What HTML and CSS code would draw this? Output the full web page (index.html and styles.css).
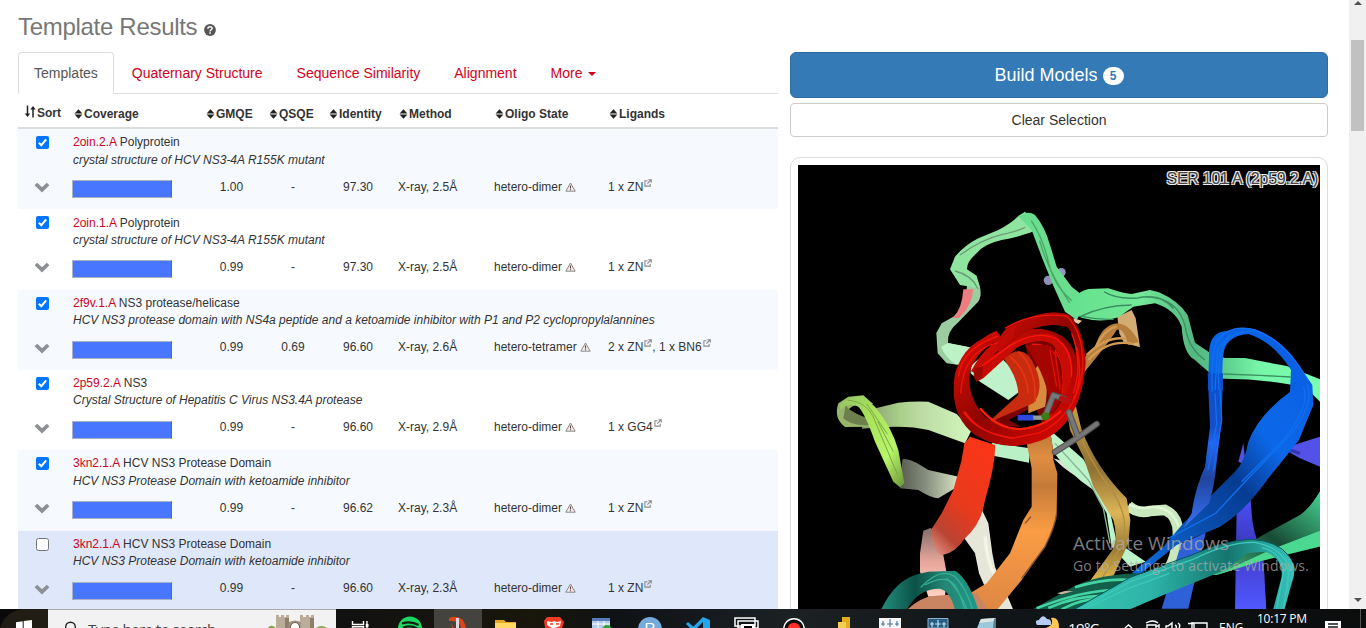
FILE: index.html
```html
<!DOCTYPE html>
<html lang="en">
<head>
<meta charset="utf-8">
<title>Template Results</title>
<link rel="stylesheet" href="styles.css">
</head>
<body>
<svg class="defs" width="0" height="0" aria-hidden="true">
  <symbol id="sort" viewBox="0 0 8 10"><path d="M4 .3 7.900 4.400H.1ZM4 9.700.1 5.600H7.900Z" fill="#222"/></symbol>
  <symbol id="down" viewBox="0 0 16 11"><path d="M.6 3.300 3.200.8 8 5.300 12.800.8 15.400 3.300 8 10.600Z" fill="#8c8f94"/></symbol>
  <symbol id="warn" viewBox="0 0 11 10"><path d="M5.500 1 10.200 9.200H.8Z" fill="#f2eeee" stroke="#888" stroke-linejoin="round"/><path d="M5.500 3.400V6.500M5.500 7.300V8.300" stroke="#784545" stroke-width="1.200"/></symbol>
  <symbol id="ext" viewBox="0 0 8 8"><path d="M3.500 1.700H.9V7.100H6.200V4.800M4.300.7H7.300V3.600M7 1 3.300 4.700" fill="none" stroke="#8b8b8b" stroke-width="1.100"/></symbol>
  <symbol id="check" viewBox="0 0 13 13"><rect width="13" height="13" rx="2" fill="#0075ff"/><path d="M2.800 6.800 5.300 9.200 10.200 3.400" fill="none" stroke="#fff" stroke-width="2"/></symbol>
  <symbol id="uncheck" viewBox="0 0 13 13"><rect x=".5" y=".5" width="12" height="12" rx="2" fill="#fff" stroke="#767676"/></symbol>
</svg>
<div class="page">
  <main class="results">
    <h1 class="title">Template Results <svg class="help" viewBox="0 0 12 12"><circle cx="6" cy="6" r="5.900" fill="#555"/><path d="M3.900 4.700C3.900 2 8.200 2.200 8.100 4.500 8 5.800 6.100 5.800 6.100 7.400M6.100 8.300V9.800" fill="none" stroke="#fff" stroke-width="1.500"/></svg></h1>
    <nav class="tabs">
      <span class="tab tab-on">Templates</span>
      <span class="tab">Quaternary Structure</span>
      <span class="tab">Sequence Similarity</span>
      <span class="tab">Alignment</span>
      <span class="tab">More <i class="caret"></i></span>
    </nav>
    <div class="head">
      <span class="head-sort"><svg width="12" height="13" viewBox="0 0 12 13"><path d="M3.500 .5V10M9 12.500V3" fill="none" stroke="#222" stroke-width="1.500"/><path d="M.8 8.500H6.200L3.500 12ZM6.300 4.500H11.700L9 1Z" fill="#222"/></svg>Sort</span>
      <span><svg class="sort"><use href="#sort"/></svg>Coverage</span>
      <span><svg class="sort"><use href="#sort"/></svg>GMQE</span>
      <span><svg class="sort"><use href="#sort"/></svg>QSQE</span>
      <span><svg class="sort"><use href="#sort"/></svg>Identity</span>
      <span><svg class="sort"><use href="#sort"/></svg>Method</span>
      <span><svg class="sort"><use href="#sort"/></svg>Oligo State</span>
      <span><svg class="sort"><use href="#sort"/></svg>Ligands</span>
    </div>
    <section class="row tint">
      <svg class="check"><use href="#check"/></svg>
      <div class="name"><div><a>2oin.2.A</a> Polyprotein</div><em>crystal structure of HCV NS3-4A R155K mutant</em></div>
      <svg class="down"><use href="#down"/></svg><i class="bar"></i>
      <span class="num">1.00</span><span class="num">-</span><span class="num">97.30</span><span>X-ray, 2.5Å</span>
      <span>hetero-dimer <svg class="warn"><use href="#warn"/></svg></span><span>1 x ZN<svg class="ext"><use href="#ext"/></svg></span>
    </section>
    <section class="row">
      <svg class="check"><use href="#check"/></svg>
      <div class="name"><div><a>2oin.1.A</a> Polyprotein</div><em>crystal structure of HCV NS3-4A R155K mutant</em></div>
      <svg class="down"><use href="#down"/></svg><i class="bar"></i>
      <span class="num">0.99</span><span class="num">-</span><span class="num">97.30</span><span>X-ray, 2.5Å</span>
      <span>hetero-dimer <svg class="warn"><use href="#warn"/></svg></span><span>1 x ZN<svg class="ext"><use href="#ext"/></svg></span>
    </section>
    <section class="row tint">
      <svg class="check"><use href="#check"/></svg>
      <div class="name"><div><a>2f9v.1.A</a> NS3 protease/helicase</div><em>HCV NS3 protease domain with NS4a peptide and a ketoamide inhibitor with P1 and P2 cyclopropylalannines</em></div>
      <svg class="down"><use href="#down"/></svg><i class="bar"></i>
      <span class="num">0.99</span><span class="num">0.69</span><span class="num">96.60</span><span>X-ray, 2.6Å</span>
      <span>hetero-tetramer <svg class="warn"><use href="#warn"/></svg></span><span>2 x ZN<svg class="ext"><use href="#ext"/></svg>, 1 x BN6<svg class="ext"><use href="#ext"/></svg></span>
    </section>
    <section class="row">
      <svg class="check"><use href="#check"/></svg>
      <div class="name"><div><a>2p59.2.A</a> NS3</div><em>Crystal Structure of Hepatitis C Virus NS3.4A protease</em></div>
      <svg class="down"><use href="#down"/></svg><i class="bar"></i>
      <span class="num">0.99</span><span class="num">-</span><span class="num">96.60</span><span>X-ray, 2.9Å</span>
      <span>hetero-dimer <svg class="warn"><use href="#warn"/></svg></span><span>1 x GG4<svg class="ext"><use href="#ext"/></svg></span>
    </section>
    <section class="row tint">
      <svg class="check"><use href="#check"/></svg>
      <div class="name"><div><a>3kn2.1.A</a> HCV NS3 Protease Domain</div><em>HCV NS3 Protease Domain with ketoamide inhibitor</em></div>
      <svg class="down"><use href="#down"/></svg><i class="bar"></i>
      <span class="num">0.99</span><span class="num">-</span><span class="num">96.62</span><span>X-ray, 2.3Å</span>
      <span>hetero-dimer <svg class="warn"><use href="#warn"/></svg></span><span>1 x ZN<svg class="ext"><use href="#ext"/></svg></span>
    </section>
    <section class="row hover">
      <svg class="check"><use href="#uncheck"/></svg>
      <div class="name"><div><a>3kn2.1.A</a> HCV NS3 Protease Domain</div><em>HCV NS3 Protease Domain with ketoamide inhibitor</em></div>
      <svg class="down"><use href="#down"/></svg><i class="bar"></i>
      <span class="num">0.99</span><span class="num">-</span><span class="num">96.60</span><span>X-ray, 2.3Å</span>
      <span>hetero-dimer <svg class="warn"><use href="#warn"/></svg></span><span>1 x ZN<svg class="ext"><use href="#ext"/></svg></span>
    </section>
  </main>
  <aside class="side">
    <div class="build">Build Models <b class="badge">5</b></div>
    <div class="clear">Clear Selection</div>
    <div class="viewer">
      <svg class="mol" viewBox="9 15 1566 1332">
        <defs>
          <linearGradient id="red" x1=".7" y1="0" x2=".2" y2="1"><stop stop-color="#fb3517"/><stop offset=".55" stop-color="#e83a1d"/><stop offset=".85" stop-color="#b94432"/><stop offset="1" stop-color="#d98072"/></linearGradient>
          <linearGradient id="orange" x1="0" y1="0" x2="0" y2="1"><stop stop-color="#e8913a"/><stop offset=".3" stop-color="#ad7234"/><stop offset=".42" stop-color="#e08d40"/><stop offset=".53" stop-color="#c47b38"/><stop offset=".7" stop-color="#fb9c45"/><stop offset="1" stop-color="#dd8743"/></linearGradient>
          <linearGradient id="blue" x1="1" y1="0" x2="0" y2="1"><stop stop-color="#0a5be2"/><stop offset=".35" stop-color="#0c68e8"/><stop offset=".52" stop-color="#063c93"/><stop offset=".72" stop-color="#0a4fae"/><stop offset="1" stop-color="#0d6ee0"/></linearGradient>
          <linearGradient id="blue2" x1="0" y1="0" x2="0" y2="1"><stop stop-color="#0a50cd"/><stop offset=".35" stop-color="#174fc8"/><stop offset=".45" stop-color="#2565f5"/><stop offset=".68" stop-color="#1f459f"/><stop offset="1" stop-color="#3a73f7"/></linearGradient>
          <linearGradient id="indigo" x1="0" y1="0" x2="0" y2="1"><stop stop-color="#5050ff"/><stop offset=".4" stop-color="#3c3cc4"/><stop offset=".7" stop-color="#4848e0"/><stop offset="1" stop-color="#5058ff"/></linearGradient>
          <linearGradient id="gold" x1="0" y1="0" x2="0" y2="1"><stop stop-color="#c79d4b"/><stop offset=".35" stop-color="#8e7132"/><stop offset=".6" stop-color="#ddb557"/><stop offset=".8" stop-color="#987b34"/><stop offset="1" stop-color="#e7bd50"/></linearGradient>
          <linearGradient id="teal"><stop stop-color="#35c6ad"/><stop offset=".35" stop-color="#2eb4a9"/><stop offset=".7" stop-color="#15766f"/><stop offset="1" stop-color="#36c5bc"/></linearGradient>
          <linearGradient id="loop" x1="0" y1="0" x2="1" y2="0"><stop stop-color="#248f7c"/><stop offset=".35" stop-color="#0b5148"/><stop offset=".65" stop-color="#248674"/><stop offset="1" stop-color="#21988a"/></linearGradient>
          <linearGradient id="green" x1="0" y1="1" x2="1" y2="0"><stop stop-color="#45c889"/><stop offset=".5" stop-color="#174b35"/><stop offset="1" stop-color="#48da95"/></linearGradient>
          <linearGradient id="mint"><stop stop-color="#63e18e"/><stop offset=".3" stop-color="#74e896"/><stop offset=".5" stop-color="#55b681"/><stop offset=".62" stop-color="#5ccc8c"/><stop offset=".75" stop-color="#76f5a8"/><stop offset="1" stop-color="#7affb0"/></linearGradient>
          <linearGradient id="pale"><stop stop-color="#87936e"/><stop offset=".35" stop-color="#a9cf8a"/><stop offset=".55" stop-color="#bddca5"/><stop offset="1" stop-color="#d1f7bd"/></linearGradient>
          <linearGradient id="grey"><stop stop-color="#575d50"/><stop offset=".45" stop-color="#899181"/><stop offset="1" stop-color="#dce7c6"/></linearGradient>
          <linearGradient id="lime" x1="0" y1="0" x2="1" y2="1"><stop stop-color="#94c663"/><stop offset=".35" stop-color="#a9e45b"/><stop offset=".7" stop-color="#b7f56a"/><stop offset="1" stop-color="#6b9437"/></linearGradient>
          <linearGradient id="pink" x1="0" y1="0" x2="0" y2="1"><stop stop-color="#836d69"/><stop offset=".5" stop-color="#e9a79c"/><stop offset="1" stop-color="#ffd2c4"/></linearGradient>
          <linearGradient id="helix" x1="0" y1="0" x2="1" y2="1"><stop stop-color="#f01006"/><stop offset=".5" stop-color="#8e0501"/><stop offset="1" stop-color="#ed0a03"/></linearGradient>
        </defs>
        <rect x="0" y="0" width="1590" height="1360"/>
        <!-- distant strands -->
        <path d="M220 750 310 728Q355 723 400 725L485 762 530 810 510 850 400 810Q330 792 200 806Z" fill="url(#pale)"/>
        <path d="M322 898Q340 890 400 930L495 951 480 985 430 1015Q410 1015 370 990L315 985Z" fill="url(#grey)"/>
        <path d="M505 1130 560 1048 580 1090 592 1180 600 1220 655 1350H600L565 1270 552 1240 540 1180Z" fill="#e6e6d9"/>
        <path d="M570 1130Q575 1200 600 1250" fill="none" stroke="#f4f4e9" stroke-width="10"/>
        <path d="M590 848 705 865 702 908 598 888Z" fill="#baf0c5"/>
        <path d="M775 895 905 935 885 968Q830 950 775 895Z" fill="#dce0d5"/>
        <path d="M765 810 865 898 905 965 945 1055 965 1145 1052 1205 1005 1220 950 1160 935 1060 895 990Q820 940 775 875Z" fill="#bdf3c8"/>
        <path d="M780 850 880 960 925 1045 945 1150" fill="none" stroke="#87b596" stroke-width="4"/>
        <path d="M1000 1037Q1030 1063 1065 1053L1110 1050Q1155 1070 1148 1135T1120 1228" fill="none" stroke="#c9e8bd" stroke-width="32"/>
        <path d="M1002 1033Q1040 1051 1072 1041 1130 1040 1151 1100" fill="none" stroke="#e0f7d7" stroke-width="7"/>
        <path d="M815 745 843 740 860 810Q905 925 995 1015L1006 1080 1000 1150 950 1260 880 1270 952 1170Q970 1130 955 1080L895 980 865 890 825 810Z" fill="url(#gold)"/>
        <path d="M838 785Q882 905 950 990 1010 1080 978 1160L915 1265" fill="none" stroke="#b18e42" stroke-width="4"/>
        <!-- upper loop -->
        <circle cx="760" cy="361" r="14" fill="#9090b7"/><circle cx="799" cy="337" r="13" fill="#9495c2"/>
        <path d="M516 378 550 365Q566 410 545 430L490 487Q455 515 459 549L530 563V620L455 610 428 580 424 519 440 490 475 470Q510 445 516 378Z" fill="#9ccda0"/>
        <path d="M459 549 532 563V620L480 612Q450 590 438 560Z" fill="#bdf2c6"/>
        <path d="M505 388H535Q530 440 492 474H474Q502 444 505 388Z" fill="#ed7d80"/>
        <path d="M480 290Q510 255 550 235L610 210Q650 190 670 168L690 155 740 205Q680 230 620 240 565 252 545 280 515 305 516 328L545 347 555 385 495 375 465 328Z" fill="#8fe4a0"/>
        <path d="M480 333Q530 345 549 386M495 285Q560 238 620 224T690 202" fill="none" stroke="#6b9a74" stroke-width="4"/>
        <path d="M670 168Q700 150 720 165 750 200 765 255L785 320 830 380 880 420 845 480 810 455 775 377 740 290 710 210Z" fill="#6bdd8f"/>
        <path d="M709 182Q745 237 761 309T840 430M734 242Q757 329 825 430" fill="none" stroke="#4aa867" stroke-width="4"/>
        <!-- amber turn -->
        <path d="M967 470 1010 450 1022 475 1035 562 987 548 973 520Z" fill="#d3ac73"/>
        <path d="M870 590 900 562Q920 492 970 490 1005 495 1031 545L1000 555Q985 500 965 510 940 550 865 640Z" fill="#b57e3d"/>
        <path d="M875 585Q935 527 993 536M880 600Q940 535 1015 552M900 565Q930 505 965 500" fill="none" stroke="#d59a52" stroke-width="7"/>
        <path d="M810 445 840 412Q855 392 880 387L940 385Q990 402 1010 402L1065 390 1092 397Q1150 422 1178 465L1200 548 1245 578 1290 594H1350Q1420 608 1475 618L1580 660V730L1530 680 1480 673Q1380 655 1280 656L1240 635 1197 598Q1165 580 1160 500 1140 448 1080 430L1015 440 970 472Q920 490 860 473Z" fill="url(#mint)"/>
        <path d="M855 470Q925 436 1010 435M927 395Q965 419 1027 414 1100 399 1135 446M1040 411Q1147 407 1171 500 1179 565 1230 600M1285 642 1395 646 1487 651M860 469Q910 480 956 478" fill="none" stroke="#3a8f60" stroke-width="4"/>
        <path d="M835 475 861 482 850 492 837 485Z" fill="#e9c9a5"/>
        <!-- warm strands -->
        <path d="M700 560Q745 620 755 690L748 740 765 820Q775 850 775 900L787 940 785 1060Q780 1100 750 1160L680 1260 606 1350H535L525 1300 575 1270 645 1180 685 1080 710 1040V925L695 850 700 720Z" fill="url(#orange)"/>
        <path d="M785 1060Q780 1100 750 1160L680 1255M708 1070 690 1090" fill="none" stroke="#825028" stroke-width="4"/>
        <path d="M385 1112 408 1103 445 1185 455 1240 450 1310H400L375 1235V1180Z" fill="url(#pink)"/>
        <path d="M525 830 600 855Q602 910 570 1020 560 1090 510 1135 480 1180 440 1186 415 1175 408 1110L440 1060 475 990 500 900 508 850Z" fill="url(#red)"/>
        <path d="M335 1350Q380 1310 415 1308L480 1303 545 1298 580 1350Z" fill="#c98462"/>
        <path d="M258 1350Q300 1260 370 1242L400 1235 480 1232Q520 1255 550 1350H480Q467 1295 435 1286 370 1285 335 1350Z" fill="url(#loop)"/>
        <path d="M377 1283Q435 1220 480 1250 515 1285 533 1350M390 1275Q450 1241 479 1275 495 1300 510 1350M455 1255Q493 1290 517 1350" fill="none" stroke="#36b096" stroke-width="4"/>
        <!-- lime turn -->
        <path d="M160 710 205 706 235 732Q170 730 160 750L220 780 228 800 150 801Q115 775 130 730Z" fill="#98b66b"/>
        <path d="M155 720Q145 735 166 750 195 770 222 774L227 795Q170 800 145 775Z" fill="#6d7f4d"/>
        <path d="M135 735Q150 710 205 708L240 740Q290 800 310 870L328 970 315 982 295 965 240 845Q210 760 190 740 160 725 135 750Z" fill="url(#lime)"/>
        <path d="M158 720Q213 725 235 771L308 945M215 731 277 822M248 784 295 875" fill="none" stroke="#7da748" stroke-width="3"/>
        <!-- helix -->
        <path d="M690 550 755 530 815 610 835 670 770 805 570 795 720 690Z" fill="#780300"/>
        <path d="M640 780 720 738 745 800 690 806Z" fill="#000"/>
        <path d="M527 618 550 598 625 600Q665 635 680 690L640 720 555 665 527 640Z" fill="#bff2cb"/>
        <path d="M735 610Q765 670 750 740L700 760 700 650Z" fill="#d78b3d"/>
        <path d="M625 595Q680 550 710 600 755 680 715 730L610 775 565 800 670 705Q670 655 625 595Z" fill="#c82b0d"/>
        <path d="M645 590Q695 630 700 700M670 575Q725 625 720 725" fill="none" stroke="#e53514" stroke-width="5"/>
        <path d="M540 640Q600 520 735 520 825 530 835 620 840 735 750 800 660 850 580 805 500 750 505 655 525 560 610 525" fill="none" stroke="url(#helix)" stroke-width="27"/>
        <path d="M610 520Q510 540 480 640 460 765 540 825 640 885 755 835 860 780 872 610 870 520 825 465 760 440 660 490L610 545 615 572 660 540Q730 480 815 500 850 530 840 640 825 720 750 795 650 825 570 770 505 700 530 610 555 555 625 540Z" fill="url(#helix)"/>
        <path d="M630 505Q710 455 815 468 870 520 862 635 840 770 735 818L650 835Q550 820 510 755M490 650Q500 565 610 528M497 700Q505 570 610 548M505 755Q545 820 660 835M710 553Q760 550 785 590M765 560 790 655Q802 720 760 775M780 570Q815 620 800 710M830 520Q865 610 835 700M845 560Q870 660 825 740" fill="none" stroke="#f01408" stroke-width="4"/>
        <path d="M690 556 760 555Q810 620 795 720L770 765Q760 650 690 556Z" fill="#a40501"/>
        <path d="M765 570 785 680M780 575 796 690" stroke="#e01006" stroke-width="4"/>
        <path d="M540 625 645 550Q700 519 760 520 828 545 833 625 832 676 800 719 818 629 775 556 740 527 665 563L565 655 545 663Z" fill="#c90b05"/>
        <path d="M545 630 645 557Q720 510 780 534 835 570 829 650" fill="none" stroke="#fb180c" stroke-width="4"/>
        <path d="M610 545Q625 500 665 490L655 532 615 573Q600 575 610 545Z" fill="#c10a05"/>
        <path d="M540 625 565 618 560 657 545 665Q530 650 540 625Z" fill="#9c0905"/>
        <path d="M555 745Q610 810 680 807 750 799 798 753" fill="none" stroke="#ff1f0e" stroke-width="7"/>
        <path d="M751 768 775 706 807 716M780 876 848 833 905 792M822 757 848 828" fill="none" stroke="#555" stroke-width="19" stroke-linecap="round" stroke-linejoin="round"/>
        <path d="M751 768 775 706 807 716M780 876 848 833 905 792M822 757 848 828" fill="none" stroke="#777" stroke-width="12" stroke-linecap="round" stroke-linejoin="round"/>
        <path d="M800 715 823 725" stroke="#b91012" stroke-width="17" stroke-linecap="round"/>
        <path d="M668 773H718" stroke="#2e48dd" stroke-width="17"/><path d="M715 773H748" stroke="#91a093" stroke-width="13"/><circle cx="751" cy="769" r="12" fill="#3b7d17"/>
        <!-- right-hand sheet -->
        <path d="M1325 1040 1365 1000 1370 1060Q1372 1115 1405 1190L1414 1350H1320Z" fill="url(#indigo)"/>
        <path d="M1465 867Q1510 850 1580 829V922L1515 895ZM1330 905 1345 850 1352 915Z" fill="#5252e8"/>
        <path d="M1475 867 1515 880" stroke="#3434a9" stroke-width="9"/>
        <path d="M1239 690 1242 590Q1240 525 1280 515L1350 503Q1425 510 1490 585L1552 675 1555 735 1512 840 1420 955Q1350 1055 1275 1100L1145 1155 1035 1243 1010 1240 1105 1160 1165 1090 1320 935Q1350 905 1360 845 1390 765 1485 695L1488 630Q1435 545 1360 522 1310 525 1291 560 1278 590 1284 690Z" fill="url(#blue)"/>
        <path d="M1238 640H1284L1280 780 1260 950Q1252 1000 1242 1030L1165 1105 1190 1060Q1200 985 1230 920L1245 800Z" fill="url(#blue2)"/>
        <path d="M1158 1152 1232 1118 1180 1346H1100Z" fill="#2e60d8"/>
        <path d="M1252 695Q1247 585 1265 545 1305 490 1380 510 1475 545 1540 663M1260 690 1268 569Q1305 513 1370 514M1272 690Q1263 574 1305 525M1535 670Q1561 725 1490 820L1360 955 1262 1060 1120 1135M1525 683Q1549 729 1470 835L1340 965M1260 700 1265 790 1239 930M1275 690 1280 780 1255 935" fill="none" stroke="#1070ef" stroke-width="4"/>
        <path d="M1580 985Q1545 1045 1515 1065L1400 1127 1308 1187 1230 1245 1265 1245 1390 1205 1580 1158Z" fill="url(#green)"/>
        <path d="M1425 1170 1580 1110V1158L1390 1205 1265 1245Z" fill="#4bd891"/>
        <path d="M715 1347 780 1310 845 1275Q930 1240 1040 1240L980 1280 860 1350Z" fill="#145f49"/>
        <path d="M725 1345Q860 1291 965 1290M760 1344Q850 1304 940 1308M800 1348Q870 1310 935 1318M840 1282Q930 1253 1010 1260" fill="none" stroke="#44d4a3" stroke-width="8"/>
        <path d="M785 1300 810 1293 835 1294 800 1303Z" fill="#c7b69d"/>
        <path d="M835 1350 1005 1253 1190 1187Q1270 1145 1365 1138 1440 1140 1480 1187 1510 1220 1490 1270L1468 1350H1434L1460 1250Q1465 1195 1410 1175L1355 1180Q1310 1225 1230 1255L1100 1307 1000 1350Z" fill="url(#teal)"/>
        <path d="M850 1348 1010 1263 1190 1200Q1300 1145 1380 1147 1450 1160 1477 1210 1487 1240 1465 1345M1400 1163Q1455 1175 1467 1230L1445 1345M867 1347 1003 1284 1123 1240" fill="none" stroke="#3fc8bc" stroke-width="4"/>
        <path d="M835 1350 1007 1251 1190 1185Q1290 1140 1365 1138 1448 1140 1484 1191" fill="none" stroke="#07565d" stroke-width="3"/>
      </svg>
      <div class="residue">SER 101 A (2p59.2.A)</div>
      <div class="watermark"><div class="wm-title">Activate Windows</div><div class="wm-sub">Go to Settings to activate Windows.</div></div>
    </div>
  </aside>
  <div class="scroll"><i class="up"></i><i class="thumb"></i><i class="dn"></i></div>
</div>
<footer class="taskbar">
  <svg class="slot start" viewBox="0 0 48 19"><path d="M0 19Q5 3 22 0H48V19Z" fill="#211d14"/><path d="M16 13.300 22.700 12.300V19H16ZM23.700 12.100 32 11V19H23.700Z" fill="#fff"/></svg>
  <div class="search">
    <svg class="lens" viewBox="0 0 14 19"><circle cx="7.500" cy="17" r="4.800" fill="none" stroke="#222" stroke-width="1.400"/></svg>
    <span class="search-text">Type here to search</span>
    <svg class="castle" viewBox="0 0 64 18"><path d="M9 5H12V7H14V5H17V7H19V5H22V18H9ZM33 5H36V7H39V5H42V7H44V5H47V18H33Z" fill="#b9ad9a"/><path d="M22 12Q28 9 34 12V18H22Z" fill="#a39380"/><circle cx="28" cy="17" r="4.500" fill="#fff" stroke="#6c5b4c"/><path d="M1 18Q3 14 8 17V18ZM49 18Q54 14 60 18Z" fill="#89a64f"/><path d="M18 8H22V18H18ZM43 8H47V18H43Z" fill="#8e7e6c"/></svg>
  </div>
  <svg class="slot" viewBox="0 0 48 19"><path d="M14.500 12V15.500H25.500V12M14.500 19V17.800H25.500V19M29 12V19" fill="none" stroke="#fff" stroke-width="1.400"/><path d="M27.700 15H30.500V18H27.700Z" fill="#fff"/></svg>
  <svg class="slot" viewBox="0 0 48 19"><circle cx="24" cy="19.500" r="12" fill="#1ed760"/><path d="M16 14.500Q25 11.500 32.500 16M17 18.500Q25 16 31 19.500" fill="none" stroke="#0c2112" stroke-width="2.300"/></svg>
  <svg class="slot active" viewBox="0 0 48 19"><path d="M15 9Q29 4 32 19H27Q26 11 15 12Z" fill="#df4319"/><path d="M22 9H25V19H22Z" fill="#ddd"/><path d="M18 19 17 14 20 19Z" fill="#df4319"/></svg>
  <svg class="slot" viewBox="0 0 48 19"><path d="M13 11H22L24 13H34V19H13Z" fill="#e5a823"/><path d="M13 14H34V19H13Z" fill="#ffd764"/></svg>
  <svg class="slot" viewBox="0 0 48 19"><path d="M17 8H30L34 13 32 19H15L14 12Z" fill="#f03c20"/><path d="M17 12 22 13 24 12 27 13 31 12 30 17 25 19H22L17 16Z" fill="#fff"/><path d="M20 15H23M26 15H29" stroke="#f03c20" stroke-width="1.500"/></svg>
  <svg class="slot" viewBox="0 0 48 19"><path d="M14 9H32V19H14Z" fill="#b3caea"/><path d="M14 9H32V12H14Z" fill="#567cbb"/><path d="M14 15H32M20 12V19M26 12V19" stroke="#fff"/><circle cx="29" cy="21" r="5" fill="#30a137"/></svg>
  <div class="slot r-slot"><span class="r-icon">R</span></div>
  <svg class="slot" viewBox="0 0 48 19"><path d="M29 8 36 11V19H29V13L23 19H18ZM12 15 14 13 21 19H16Z" fill="#24a6ec"/></svg>
  <svg class="slot" viewBox="0 0 48 19"><path d="M13 9H33V17H13ZM16 12H36V19H16Z" fill="#101417" stroke="#fff" stroke-width="1.500"/><path d="M19 15H33V19H19Z" fill="#fff"/><path d="M22 17H30V19H22Z"/></svg>
  <svg class="slot" viewBox="0 0 48 19"><circle cx="24" cy="20" r="10.300" fill="#090909" stroke="#fff" stroke-width="1.500"/><circle cx="24" cy="20" r="6.300" fill="#ff2d26"/></svg>
  <svg class="slot" viewBox="0 0 48 19"><path d="M24 8H32V19H24Z" fill="#e3ae18"/><path d="M20 13H28V19H20Z" fill="#f4ce54"/></svg>
  <svg class="slot" viewBox="0 0 48 19"><path d="M13 9H35V19H13Z" fill="#f6f7f8"/><path d="M24 10V18M21 15H27M17 12V17M15 15H19M31 12V17M29 15H33" stroke="#527b9a" stroke-width="1.200"/></svg>
  <svg class="slot" viewBox="0 0 48 19"><path d="M14 9.500H34V19H14Z" fill="#255e84" stroke="#8fb0c6"/><path d="M24 11V18M21 15H27M18 13V18M16 15H20M30 13V18M28 15H32" stroke="#c8e0ef" stroke-width="1.200"/></svg>
  <svg class="slot" viewBox="0 0 48 19"><path d="M19 10 34 9V19H15Z" fill="#9bc8da"/><path d="M19 10 34 9V12L17 14Z" fill="#dfe4e4"/><path d="M32 10 34 9V19H31Z" fill="#5a7f8b"/></svg>
  <svg class="weather" viewBox="0 0 26 19"><path d="M16 9Q24 7 24 19H11Q20 16 16 9Z" fill="#ffc653"/><path d="M2 16Q-1 11 4 11 8 4 12 10 17 10 16 16Z" fill="#b8cdf6"/></svg>
  <span class="tray-text temp">19°C</span>
  <svg class="tray" viewBox="0 0 92 19"><path d="M7 19 10.500 16 14 19M28 14Q35 10 40 14M29 19V16H38V19M38 18 41 16V19M48 19V17H50L54 14V19M57 16Q59 17 58 19M60 14Q63 16 61 19M74 14H89V19M74 13V19M70 14.500H76V19" fill="none" stroke="#fff" stroke-width="1.400"/></svg>
  <span class="tray-text lang">ENG</span>
  <span class="time">10:17 PM</span>
  <svg class="note" viewBox="0 0 16 19"><path d="M0 12H16V19H0Z" fill="#fff"/><path d="M3 15H13M3 18H13" stroke="#15191a" stroke-width="1.400"/></svg>
  <i class="peek"></i>
</footer>
</body>
</html>
```
FILE: styles.css
```css
* { box-sizing: border-box; }
body { margin: 0; width: 1366px; height: 628px; overflow: hidden; background: #fff; font-family: "Liberation Sans", Arial, sans-serif; color: #333; font-size: 12px; }
.defs { display: none; }
.page { display: flex; height: 609px; overflow: hidden; }
.results { width: 760px; margin-left: 18px; flex: none; }
.title { margin: 0; height: 52px; padding-top: 13px; font-size: 24px; line-height: 28px; font-weight: 400; color: #777; white-space: nowrap; letter-spacing: -.3px; }
.help { width: 12px; height: 12px; vertical-align: -1px; }
.tabs { display: flex; height: 42px; border-bottom: 1px solid #ddd; font-size: 14px; line-height: 20px; }
.tab { height: 42px; padding: 10px 15px 0; margin-right: 2px; color: #d0021b; border: 1px solid transparent; white-space: nowrap; }
.tab-on { color: #555; border-color: #ddd #ddd #fff; border-radius: 4px 4px 0 0; background: #fff; }
.caret { display: inline-block; border: 4px solid transparent; border-top-color: #d0021b; border-bottom: 0; vertical-align: middle; margin-left: 2px; }
.head { display: grid; grid-template-columns: 50px 132px 63px 60px 70px 96px 114px 1fr; padding-left: 6px; height: 35.2px; border-bottom: 2px solid #ddd; font-weight: 700; line-height: 17px; padding-top: 12px; white-space: nowrap; }
.head-sort { margin-top: -1px; }
.head-sort svg { vertical-align: -1px; margin-right: 1px; }
.sort { width: 9px; height: 10px; margin-right: 1px; vertical-align: -1px; }
.row { display: grid; grid-template-columns: 55px 129px 59px 64px 73px 96px 114px 1fr; grid-template-rows: 46px 34.28px; height: 80.28px; line-height: 17.22px; white-space: nowrap; }
.tint { background: #f6faff; }
.hover { background: #dfe7fa; }
.check { width: 13px; height: 13px; margin: 7px 0 0 18px; }
.name { grid-column: 2 / -1; padding-top: 5.1px; }
.name em { display: block; }
.row a { color: #d0021b; }
.row span { padding-top: 3.33px; }
.down { width: 16px; height: 11px; margin: 7px 0 0 16px; }
.bar { width: 100px; height: 18px; margin-top: 5px; background: #4876ff; border: 1px solid #a9b3c8; border-right-color: #386aef; margin-left: -1px; }
.num { text-align: center; }
.row .num:nth-of-type(3) { padding-right: 7px; }
.warn { width: 11px; height: 10px; vertical-align: -1px; }
.ext { width: 8px; height: 8px; vertical-align: 4px; margin-left: 1px; }
.side { width: 538px; margin: 52px 0 0 12px; flex: none; }
.build { display: flex; align-items: center; justify-content: center; gap: 5px; height: 46px; border: 1px solid #2e6da4; border-radius: 6px; background: #337ab7; color: #fff; font-size: 18px; }
.badge { width: 21px; height: 18px; border-radius: 10px; background: #fff; color: #337ab7; font-size: 12px; line-height: 18px; text-align: center; margin-top: 2px; }
.clear { height: 34px; margin-top: 5px; border: 1px solid #ccc; border-radius: 4px; font-size: 14px; line-height: 32px; text-align: center; }
.viewer { position: relative; height: 460px; margin-top: 20px; padding: 7px; border: 1px solid #ddd; border-radius: 10px; }
.mol { display: block; width: 522px; height: 444px; }
.residue { position: absolute; top: 11px; right: 9px; font-size: 16px; line-height: 20px; letter-spacing: -.25px; color: #444; white-space: nowrap; text-shadow: -1px -1px #eee, 1px -1px #eee, -1px 1px #eee, 1px 1px #eee; }
.watermark { position: absolute; left: 282px; top: 372px; font-family: "Open Sans", sans-serif; color: rgba(175,175,175,.72); white-space: nowrap; }
.wm-title { font-size: 19px; line-height: 26px; }
.wm-sub { font-size: 14px; line-height: 20px; letter-spacing: .19px; }
.scroll { width: 17px; height: 609px; margin-left: auto; background: #f0f0f0; display: flex; flex-direction: column; align-items: center; }
.up { border: 4px solid transparent; border-top: 0; border-bottom-color: #505050; margin-top: 1px; }
.thumb { width: 13px; height: 91px; margin-top: 35px; background: #c1c1c1; }
.dn { border: 4px solid transparent; border-bottom: 0; border-top-color: #505050; margin-top: auto; margin-bottom: 7px; }
.taskbar { display: flex; height: 19px; overflow: hidden; background: linear-gradient(90deg, #090a09 0, #111 25%, #19160b 39%, #0e1214 45%, #1c2123 58%, #11171a 70%, #0b0d0d 100%); }
.slot { width: 48px; height: 19px; flex: none; overflow: hidden; }
.search { display: flex; width: 288px; height: 19px; margin-right: 2px; background: #f2f2f2; border-top: 1px solid #aaa; overflow: hidden; flex: none; }
.lens { width: 14px; height: 19px; margin-left: 15px; }
.search-text { font: 15px/20px "Open Sans", sans-serif; color: #444; margin: 9px 0 0 11px; width: 129px; white-space: nowrap; letter-spacing: -.55px; }
.castle { width: 64px; height: 18px; margin-left: 50px; }
.active { background: #45433e; }
.r-slot { padding: 8px 0 0 12px; }
.r-icon { display: block; width: 24px; height: 24px; border-radius: 50%; background: #75aadb; color: #fff; font-size: 15px; line-height: 22px; text-align: center; }
.weather { width: 26px; height: 19px; margin-left: 25px; flex: none; }
.tray-text, .time { color: #fff; font: 12px/16px "Open Sans", sans-serif; white-space: nowrap; flex: none; }
.temp { width: 47px; margin: 10px 0 0 7px; font-size: 15px; line-height: 18px; letter-spacing: -.6px; }
.tray { width: 92px; height: 19px; margin-left: 3px; flex: none; }
.lang { width: 38px; margin: 11px 0 0 9px; }
.time { width: 69px; margin-top: 2px; letter-spacing: -.25px; }
.note { width: 16px; height: 19px; margin-left: -1px; flex: none; }
.peek { width: 1px; height: 19px; margin-left: 19px; background: #555; flex: none; }
```
